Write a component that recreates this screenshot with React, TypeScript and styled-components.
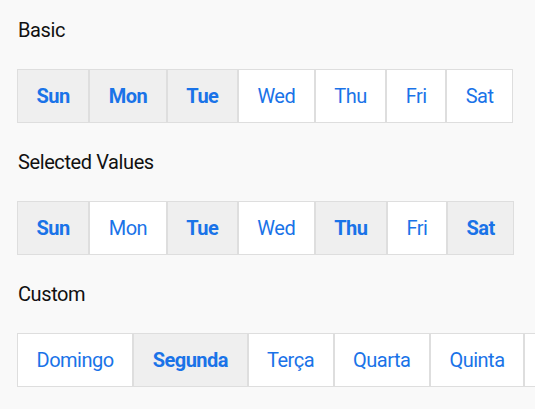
import React, { useState } from 'react'
import styled, { createGlobalStyle } from 'styled-components'

const GlobalStyle = createGlobalStyle`
  html, body {
    margin: 0;
    background: #f9f9f9;
    font-family: Roboto, "Liberation Sans", sans-serif;
    overflow: hidden;
  }
`

const Page = styled.div`
  padding: 18px 0 0 17px;
`

const Section = styled.section`
  margin-bottom: 27px;
`

const Label = styled.div`
  font-size: 20px;
  line-height: 24px;
  letter-spacing: -0.4px;
  color: #111;
  margin: 0 0 27px 1px;
`

const Group = styled.div`
  display: flex;
  flex-wrap: nowrap;
  width: max-content;
`

const DayButton = styled.button<{ $active: boolean }>`
  height: 54px;
  padding: 0 18.5px;
  border: 1px solid #dedede;
  background: ${(p) => (p.$active ? '#efefef' : '#fff')};
  color: #1a73e8;
  font-family: Roboto, "Liberation Sans", sans-serif;
  font-size: 20px;
  letter-spacing: -0.5px;
  font-weight: ${(p) => (p.$active ? 700 : 400)};
  cursor: pointer;
  white-space: nowrap;
`

type PickerProps = { days: string[]; initial: number[] }

function DayPicker({ days, initial }: PickerProps) {
  const [selected, setSelected] = useState<number[]>(initial)
  const toggle = (i: number) =>
    setSelected((s) => (s.includes(i) ? s.filter((x) => x !== i) : [...s, i]))
  return (
    <Group>
      {days.map((d, i) => (
        <DayButton key={d} $active={selected.includes(i)} onClick={() => toggle(i)}>
          {d}
        </DayButton>
      ))}
    </Group>
  )
}

const short = ['Sun', 'Mon', 'Tue', 'Wed', 'Thu', 'Fri', 'Sat']
const custom = ['Domingo', 'Segunda', 'Terça', 'Quarta', 'Quinta', 'Sexta', 'Sábado']

export default function App() {
  return (
    <>
      <GlobalStyle />
      <Page>
        <Section>
          <Label>Basic</Label>
          <DayPicker days={short} initial={[0, 1, 2]} />
        </Section>
        <Section>
          <Label>Selected Values</Label>
          <DayPicker days={short} initial={[0, 2, 4, 6]} />
        </Section>
        <Section>
          <Label>Custom</Label>
          <DayPicker days={custom} initial={[1]} />
        </Section>
      </Page>
    </>
  )
}
